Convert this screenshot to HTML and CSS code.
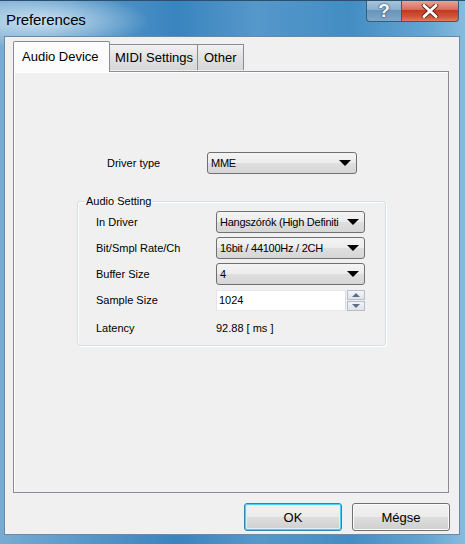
FILE: index.html
```html
<!DOCTYPE html>
<html lang="hu">
<head>
  <meta charset="UTF-8">
  <title>Preferences</title>
  <link rel="stylesheet" href="styles.css">
</head>
<body>
  <div class="window">
    <div class="titlebar">
      <span class="title">Preferences</span>
      <div class="caption-buttons">
        <div class="cap-btn help">?</div>
        <div class="cap-btn close">
          <svg width="18" height="14" viewBox="0 0 18 14">
            <path d="M3 1.5 L15 12.5 M15 1.5 L3 12.5" stroke="#5a1a14" stroke-width="4.6" stroke-linecap="round"/>
            <path d="M3 1.5 L15 12.5 M15 1.5 L3 12.5" stroke="#ffffff" stroke-width="3" stroke-linecap="round"/>
          </svg>
        </div>
      </div>
    </div>

    <div class="client">
      <div class="tabs">
        <div class="tab active">Audio Device</div>
        <div class="tab midi">MIDI Settings</div>
        <div class="tab other">Other</div>
      </div>

      <div class="panel">
        <div class="driver-row">
          <span class="label">Driver type</span>
          <div class="combo wide"><span>MME</span><i class="arrow"></i></div>
        </div>

        <fieldset class="group">
          <legend>Audio Setting</legend>
          <div class="row">
            <span class="label">In Driver</span>
            <div class="combo"><span>Hangszórók (High Definiti</span><i class="arrow"></i></div>
          </div>
          <div class="row">
            <span class="label">Bit/Smpl Rate/Ch</span>
            <div class="combo"><span>16bit / 44100Hz / 2CH</span><i class="arrow"></i></div>
          </div>
          <div class="row">
            <span class="label">Buffer Size</span>
            <div class="combo"><span>4</span><i class="arrow"></i></div>
          </div>
          <div class="row">
            <span class="label">Sample Size</span>
            <div class="spin-field">
              <div class="edit">1024</div>
              <div class="spinner">
                <div class="spin up"><i></i></div>
                <div class="spin down"><i></i></div>
              </div>
            </div>
          </div>
          <div class="row latency">
            <span class="label">Latency</span>
            <span class="value">92.88 [ ms ]</span>
          </div>
        </fieldset>
      </div>

      <div class="buttons">
        <div class="btn default">OK</div>
        <div class="btn">Mégse</div>
      </div>
    </div>
  </div>
</body>
</html>
```

FILE: styles.css
```css
* { box-sizing: border-box; }

body {
  margin: 0;
  padding: 0;
  font-family: "Liberation Sans", Arial, sans-serif;
  color: #000;
}

.window {
  width: 465px;
  height: 544px;
  display: flex;
  flex-direction: column;
  background:
    radial-gradient(ellipse 110px 28px at 40px 20px, rgba(220, 236, 246, 0.85), rgba(220, 236, 246, 0) 100%),
    linear-gradient(90deg, #78abd2 0%, #5898c9 18%, #3984bf 38%, #5598ca 55%, #438dc4 75%, #64a5d2 92%, #88bcde 100%);
  border-top: 1px solid #2d4f6e;
  overflow: hidden;
}

.titlebar {
  height: 35px;
  display: flex;
  align-items: flex-start;
  position: relative;
}

.title {
  font-size: 15px;
  color: #000;
  margin: 10px 0 0 6px;
  letter-spacing: -0.1px;
}

.caption-buttons {
  display: flex;
  margin-left: auto;
  margin-right: 6px;
  margin-top: -1px;
}

.cap-btn {
  height: 22px;
  border: 1px solid #3a5a7c;
  border-top: none;
  display: flex;
  align-items: center;
  justify-content: center;
}

.help {
  width: 35px;
  border-radius: 0 0 0 4px;
  border-right: none;
  background: linear-gradient(#a9c7de 0%, #8bb0cf 45%, #6a94b9 50%, #7ea8c9 100%);
  color: #fff;
  font-size: 19px;
  font-weight: bold;
  text-shadow: 0 0 2px #1d3550, 0 0 1px #1d3550;
}

.close {
  width: 58px;
  border-radius: 0 0 4px 0;
  background: linear-gradient(#e9a99c 0%, #d7705c 45%, #c4381f 50%, #d2553c 80%, #e07a5f 100%);
}

.client {
  flex: 1;
  margin: 0 5px 9px 4px;
  background: #f0f0f0;
  border: 1px solid #6b89a8;
  padding: 3px 10px 0 8px;
  display: flex;
  flex-direction: column;
}

.tabs {
  display: flex;
  align-items: flex-end;
  height: 31px;
  position: relative;
  z-index: 1;
}

.tab {
  height: 26px;
  padding: 0 6px;
  font-size: 13px;
  line-height: 25px;
  border: 1px solid #898c95;
  border-left: none;
  border-bottom: none;
  background: linear-gradient(#f2f2f2, #e1e1e1 50%, #d6d6d6);
  margin-bottom: 1px;
}

.tab.midi { width: 88px; padding: 0 0 0 5px; }
.tab.other { width: 46px; padding: 0 0 0 6px; }

.tab.active {
  width: 97px;
  height: 31px;
  padding: 0 0 0 8px;
  border-left: 1px solid #898c95;
  background: #fcfcfc;
  line-height: 30px;
  margin-bottom: -1px;
  border-radius: 2px 2px 0 0;
}

.panel {
  height: 422px;
  border: 1px solid #898c95;
  background: #f0f0f0;
  box-shadow: inset 1px 1px 0 #ffffff;
  font-size: 11px;
  padding: 80px 0 0 0;
}

.driver-row {
  display: flex;
  align-items: center;
  margin-left: 93px;
}

.driver-row .label { width: 100px; }

.combo {
  width: 149px;
  height: 22px;
  border: 1px solid #707070;
  border-radius: 3px;
  background: linear-gradient(#f4f4f4 0%, #ececec 48%, #dedede 52%, #d6d6d6 100%);
  display: flex;
  align-items: center;
  padding: 0 5px 0 3px;
  font-size: 11px;
  letter-spacing: -0.25px;
  white-space: nowrap;
}

.combo.wide { width: 150px; }

.combo span { flex: 1; }

.arrow {
  width: 0;
  height: 0;
  border-left: 6px solid transparent;
  border-right: 6px solid transparent;
  border-top: 6px solid #000;
  margin-left: 2px;
}

.group {
  margin: 21px 0 0 63px;
  width: 309px;
  height: 151px;
  border: 1px solid #d5dfe5;
  border-radius: 3px;
  box-shadow: inset 1px 1px 0 #fff, 1px 1px 0 #fff;
  padding: 2px 0 0 18px;
}

.group legend {
  padding: 0 1px;
  margin-left: -11px;
  font-size: 11px;
}

.row {
  display: flex;
  align-items: center;
  height: 26px;
}

.row .label { width: 120px; }

.spin-field {
  display: flex;
  align-items: center;
  height: 22px;
}

.edit {
  width: 130px;
  height: 21px;
  border: 1px solid #abadb3;
  border-top-color: #e3e9ef;
  border-left-color: #e2e3ea;
  border-right-color: #dbdfe6;
  border-bottom-color: #e3e9ef;
  background: #fff;
  padding: 3px 0 0 2px;
  font-size: 11px;
}

.spinner {
  margin-left: 1px;
  width: 18px;
  height: 21px;
  display: flex;
  flex-direction: column;
  gap: 1px;
}

.spin {
  flex: 1;
  border: 1px solid #b4bdc8;
  background: linear-gradient(#f3f5f8, #dfe4ea);
  display: flex;
  align-items: center;
  justify-content: center;
}

.spin i {
  width: 0;
  height: 0;
  border-left: 4px solid transparent;
  border-right: 4px solid transparent;
}

.spin.up i { border-bottom: 4px solid #5d6f88; }
.spin.down i { border-top: 4px solid #5d6f88; }

.row.latency { height: 30px; }

.buttons {
  display: flex;
  justify-content: flex-end;
  gap: 10px;
  margin: 10px -1px 0 0;
}

.btn {
  width: 98px;
  height: 28px;
  border: 1px solid #707070;
  border-radius: 3px;
  background: linear-gradient(#f2f2f2 0%, #ebebeb 48%, #dddddd 52%, #cfcfcf 100%);
  font-size: 13px;
  display: flex;
  align-items: center;
  justify-content: center;
  box-shadow: inset 0 0 0 1px #fcfcfc;
}

.btn.default {
  border-color: #3c7fb1;
  box-shadow: inset 0 0 0 1px #48d0f6, inset 0 0 0 2px #d9f1fb;
}
```
